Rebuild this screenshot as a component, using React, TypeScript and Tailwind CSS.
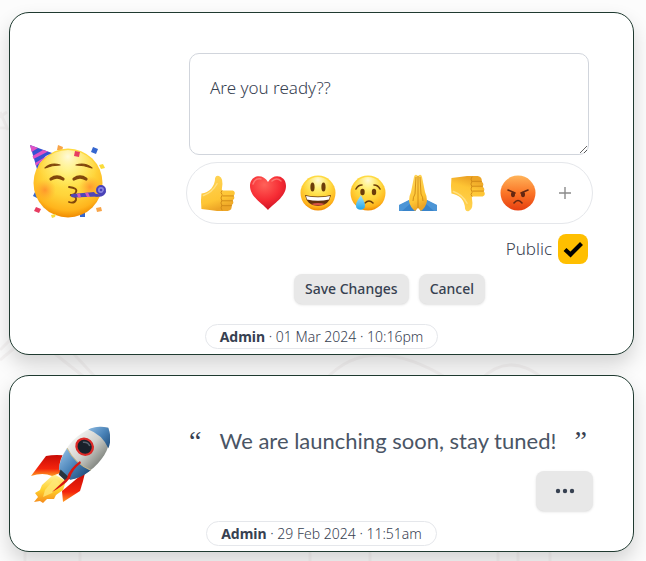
import React from "react";

function Gradients() {
  return (
    <svg className="absolute h-0 w-0" aria-hidden="true">
      <defs>
        <radialGradient id="face" cx="0.5" cy="0.3" r="0.7">
          <stop offset="0" stopColor="#fff05a" />
          <stop offset="0.55" stopColor="#ffd43a" />
          <stop offset="0.85" stopColor="#ffb41c" />
          <stop offset="1" stopColor="#f08a00" />
        </radialGradient>
        <radialGradient id="shine" cx="0.5" cy="0.1" r="0.5">
          <stop offset="0" stopColor="#fffbe0" stopOpacity="0.95" />
          <stop offset="1" stopColor="#fff27a" stopOpacity="0" />
        </radialGradient>
        <radialGradient id="blush">
          <stop offset="0" stopColor="#ff7a2a" stopOpacity="0.65" />
          <stop offset="1" stopColor="#ff9a2a" stopOpacity="0" />
        </radialGradient>
        <linearGradient id="angry" x1="0" y1="0" x2="0" y2="1">
          <stop offset="0" stopColor="#ffb45a" />
          <stop offset="0.5" stopColor="#fb7527" />
          <stop offset="1" stopColor="#e63f10" />
        </linearGradient>
        <linearGradient id="hand" x1="0" y1="0" x2="0.3" y2="1">
          <stop offset="0" stopColor="#ffd65a" />
          <stop offset="0.75" stopColor="#fec534" />
          <stop offset="1" stopColor="#eda526" />
        </linearGradient>
        <radialGradient id="heart" cx="0.4" cy="0.25" r="0.75">
          <stop offset="0" stopColor="#ff6259" />
          <stop offset="0.6" stopColor="#f62c34" />
          <stop offset="1" stopColor="#cf1426" />
        </radialGradient>
        <linearGradient id="tear" x1="0" y1="0" x2="0" y2="1">
          <stop offset="0" stopColor="#a5e6ff" />
          <stop offset="1" stopColor="#23a4e6" />
        </linearGradient>
        <linearGradient id="hull" x1="0" y1="0" x2="1" y2="0">
          <stop offset="0" stopColor="#f0f0ed" />
          <stop offset="0.5" stopColor="#cfd0cc" />
          <stop offset="1" stopColor="#858983" />
        </linearGradient>
        <linearGradient id="steel" x1="0" y1="0" x2="1" y2="0">
          <stop offset="0" stopColor="#86b5de" />
          <stop offset="0.5" stopColor="#4a83b8" />
          <stop offset="1" stopColor="#23507e" />
        </linearGradient>
        <linearGradient id="fin" x1="0" y1="0" x2="0" y2="1">
          <stop offset="0" stopColor="#c80c06" />
          <stop offset="0.65" stopColor="#f4240c" />
          <stop offset="1" stopColor="#ff9a20" />
        </linearGradient>
        <linearGradient id="flame" x1="0" y1="0" x2="0" y2="1">
          <stop offset="0" stopColor="#fff3a0" />
          <stop offset="0.55" stopColor="#ffd02c" />
          <stop offset="1" stopColor="#f5891a" />
        </linearGradient>
      </defs>
    </svg>
  );
}

function PartyFace() {
  return (
    <svg viewBox="0 -1 80 80" className="size-20 shrink-0" role="img" aria-label="Partying face">
      <path d="M28 5 l5 2 -1 4 -5 -1z M66 68 l5 -1 1 4 -5 1z" fill="#f8a549" />
      <path d="M50 73 h5 v4 h-5z M5 52 l4 2 -2 4 -4 -2z" fill="#3566cf" />
      <circle cx="38" cy="43" r="34.500" fill="url(#face)" />
      <circle cx="38" cy="43" r="33" fill="url(#shine)" />
      <circle cx="15" cy="50" r="11" fill="url(#blush)" />
      <circle cx="60" cy="47" r="11" fill="url(#blush)" />
      <path d="M0 5 L22 13 Q11 17 7 29 Z" fill="#3551d2" />
      <path d="M0 5 L8 8 L1.600 12 Z M13 10 L18 11.500 L3.500 19 L2.500 16 Z M22 13 L17 16 L6 26 L5 23 Z" fill="#e052c4" />
      <path d="M15 28 Q21 22 30 25 Q22 25 15 28 Z M46 25 Q55 22 62 28 Q54 25 46 25 Z" fill="#81470b" stroke="#81470b" strokeWidth="1.200" strokeLinejoin="round" />
      <path d="M21 39 Q27 35 33 39 M44 39 Q50 35 56 39" fill="none" stroke="#81470b" strokeWidth="3.200" strokeLinecap="round" />
      <path d="M39 47 Q48 48 46 52 Q45 55 40 55 Q47 56 46 60 Q44 64 39 62" fill="none" stroke="#81470b" strokeWidth="1.800" strokeLinecap="round" />
      <path d="M42 54 L64 52 L68 56.500 L43 57.500 Q39 56 42 54 Z" fill="#5147b6" />
      <path d="M47 54 L50 53.500 L51 57.500 L48 57.500 Z M55 53 L58 52.500 L60 57 L57 57 Z" fill="#d75ab8" />
      <circle cx="71" cy="50" r="4" fill="#8b86e0" stroke="#4a43b8" strokeWidth="2" />
      <circle cx="71" cy="50" r="1.300" fill="#4a43b8" />
      <path d="M65 55 Q73 57 75 51" fill="none" stroke="#4a43b8" strokeWidth="2.500" />
      <path d="M45 11 l5 1 -1 5 -5 -1z M6 67 l5 2 -2 4 -5 -2z" fill="#e73c61" />
      <path d="M63 7 l5 2 -2 5 -5 -2z" fill="#3566cf" />
      <path d="M69 25 l4 -1 2 4 -4 1z M21 75 l5 -1 -1 3 -3 1z" fill="#fadc3a" />
    </svg>
  );
}

function Rocket() {
  return (
    <svg viewBox="0 0 80 80" className="size-20 shrink-0" role="img" aria-label="Rocket">
      <path d="M24 48 L12 59 10 64 5 67 8 71 4 76 10 75 13 77 17 73 24 73 26 69 33 64 36 55 Z" fill="url(#flame)" />
      <path d="M25 52 L15 64 13 71 22 67 30 58 Z" fill="#ffe777" opacity="0.8" />
      <path d="M39 30 Q26 28 16 30 L1 50 Q13 46 22 50 L33 46 Z" fill="url(#fin)" />
      <path d="M50 50 Q38 60 32 65 L33 76 L50 65 Q53 56 55 47 Z" fill="url(#fin)" />
      <g transform="translate(51 31) rotate(43) scale(1.080 1)">
        <path d="M0 -40 C13 -33 18 -14 14.500 5 Q12 17 7 24 L-7 24 Q-13 17 -15 5 C-18 -14 -13 -33 0 -40Z" fill="url(#hull)" />
        <path d="M0 -40 C7 -36 11 -31 13 -25 Q0 -31 -12.500 -25 C-10 -32 -6 -36 0 -40Z" fill="url(#steel)" />
        <path d="M-15 3 Q0 9 15 3 Q13 17 7 24 L-7 24 Q-13 17 -15 3Z" fill="url(#steel)" />
        <path d="M-15 3 Q0 9 15 3" fill="none" stroke="#c8b98a" strokeWidth="1" />
        <circle cx="-4" cy="-10" r="9" fill="#dc2927" />
        <circle cx="-4" cy="-10" r="6.800" fill="#19202a" />
        <path d="M-8 -12 Q-5 -16 -1 -14" fill="none" stroke="#59636f" strokeWidth="1.500" />
        <path d="M-6 23 H6 L4 28 H-4 Z" fill="#29333d" />
      </g>
      <path d="M50 35 Q39 43 37 52 L22 66 Q35 59 40 52 Q42 44 51 37 Z" fill="#d71710" />
    </svg>
  );
}

const glyph = "size-9";

function Thumb({ down = false }: { down?: boolean }) {
  return (
    <svg viewBox="0 0 36 38" className={down ? "h-[37px] w-9 -scale-y-100" : "h-[37px] w-9"}>
      <path d="M1 19 Q7 18 11 14 Q15 9 15 3 Q16 0 19 1 Q24 3 22 14 L22 16 H33 Q36 17 35 20 L34 21 Q36 24 33 26 Q35 29 32 31 Q33 36 28 37 H17 Q10 36 1 35 Q0 26 1 19Z" fill="url(#hand)" />
      <path d="M22 16 Q20 18 22 20 M23 21.500 H34 M22 26.500 H33 M22 31.500 H32 M22 21 Q20 24 22 26 Q20 29 22 31 Q20 34 22 36" fill="none" stroke="#d18a18" strokeWidth="1" strokeLinecap="round" />
      <path d="M3 21 Q12 18 17 9" fill="none" stroke="#ffe083" strokeWidth="1.500" strokeLinecap="round" />
    </svg>
  );
}

function Heart() {
  return (
    <svg viewBox="0 0 36 36" className={glyph}>
      <path d="M18 35 C13 29 0 22 0 11 C0 0 13 -2 18 7 C23 -2 36 0 36 11 C36 22 23 29 18 35Z" fill="url(#heart)" />
      <path d="M3 9 Q5 3 11 4 M22 6 Q27 2 31 6" fill="none" stroke="#ff9b91" strokeWidth="1.500" strokeLinecap="round" opacity="0.6" />
    </svg>
  );
}

function Grin() {
  return (
    <svg viewBox="0 0 36 36" className={glyph}>
      <circle cx="18" cy="18" r="17.500" fill="url(#face)" />
      <circle cx="18" cy="18" r="16" fill="url(#shine)" />
      <ellipse cx="12.500" cy="12" rx="2.100" ry="4.500" fill="#6c3d0a" />
      <ellipse cx="23.500" cy="12" rx="2.100" ry="4.500" fill="#6c3d0a" />
      <path d="M5 20 Q18 23 31 20 Q29 31 18 31 Q7 31 5 20Z" fill="#63310c" />
      <path d="M6 21 Q18 23.500 30 21 L29 24.500 Q18 27 7 24.500Z" fill="#fff" />
      <path d="M11 29 Q18 27 25 29 Q18 32 11 29Z" fill="#d85346" />
    </svg>
  );
}

function Cry() {
  return (
    <svg viewBox="0 0 36 36" className={glyph}>
      <circle cx="18" cy="18" r="17.500" fill="url(#face)" />
      <circle cx="18" cy="18" r="16" fill="url(#shine)" />
      <ellipse cx="12.500" cy="17" rx="2.200" ry="3.200" fill="#6c3d0a" />
      <ellipse cx="24" cy="17" rx="2.200" ry="3.200" fill="#6c3d0a" />
      <path d="M6 14 Q8 10 12 10 M30 14 Q28 10 24 10 M15 28 Q19 24 23 28" fill="none" stroke="#6c3d0a" strokeWidth="1.600" strokeLinecap="round" />
      <path d="M11 20 C8 25 6 27 6 31 C6 36 15 36 15 31 C15 27 13 25 11 20Z" fill="url(#tear)" />
    </svg>
  );
}

function Pray() {
  return (
    <svg viewBox="0 0 38 38" className="size-[38px]">
      <path d="M0 31 L10 26 L17 37 H0Z M38 31 L28 26 L21 37 H38Z" fill="#3984ca" />
      <path d="M0 31 L10 26 L12 29 L3 37 H0Z M38 31 L28 26 L26 29 L35 37 H38Z" fill="#60a5e2" opacity="0.5" />
      <path d="M19 2 Q16 -1 15 3 L12 18 Q10 22 10 27 Q11 33 16 37 L19 34 L22 37 Q27 33 28 27 Q28 22 26 18 L23 3 Q22 -1 19 2Z" fill="url(#hand)" />
      <path d="M19 2 V34 M17 3 L16 20 Q14 23 14 27 M21 3 L22 20 Q24 23 24 27" fill="none" stroke="#c8820f" strokeWidth="0.800" />
    </svg>
  );
}

function Angry() {
  return (
    <svg viewBox="0 0 36 36" className={glyph}>
      <circle cx="18" cy="18" r="17.500" fill="url(#angry)" />
      <path d="M8 15 L15 18 M28 15 L21 18 M14 28 Q18 23 22 28" fill="none" stroke="#642711" strokeWidth="1.600" strokeLinecap="round" />
      <ellipse cx="13" cy="19.500" rx="2" ry="2.800" fill="#642711" />
      <ellipse cx="23" cy="19.500" rx="2" ry="2.800" fill="#642711" />
    </svg>
  );
}

const reactions = [
  { name: "Thumbs up", icon: <Thumb /> },
  { name: "Heart", icon: <Heart /> },
  { name: "Grinning", icon: <Grin /> },
  { name: "Crying", icon: <Cry /> },
  { name: "Folded hands", icon: <Pray /> },
  { name: "Thumbs down", icon: <Thumb down /> },
  { name: "Angry", icon: <Angry /> },
];

function Byline({ date }: { date: string }) {
  return (
    <p className="mx-auto w-fit rounded-full border border-gray-200 px-3.5 text-sm leading-[23px] font-light">
      <b className="font-bold">Admin</b> · {date}
    </p>
  );
}

const card =
  "rounded-[20px] border border-[#1f3a30] bg-white pb-[5px] shadow-[0_10px_20px_rgba(0,0,0,0.16)]";
const button = "rounded-lg bg-[#e8e8e8] font-medium shadow-sm";

export default function App() {
  return (
    <div className="relative min-h-screen bg-[#fcfcfc] pt-3 pr-3 pb-[9px] pl-[9px] font-['Noto_Sans',sans-serif] text-[#374151]">
      <Gradients />
      <svg className="absolute inset-0 h-full w-full" aria-hidden="true">
        <g fill="none" stroke="#c9b8b2" strokeOpacity="0.12" strokeWidth="3">
          <path d="M-5 120 l12 -8 M0 112 l8 18 M-4 128 h12" />
          <path d="M0 360 L30 335 M0 350 L20 330 M50 350 L88 380 M70 350 L98 380" />
          <path d="M325 380 Q370 330 450 380 M480 380 Q510 350 545 380" />
          <path d="M25 552 v9 M80 552 v9 M310 552 v9 M370 552 v9 M498 552 v9 M518 552 v9 M550 552 v9" />
        </g>
      </svg>
      <main className="relative flex flex-col gap-5">
        <article className={card}>
          <form className="flex items-center gap-19 pt-10 pr-10 pl-5" onSubmit={(e) => e.preventDefault()}>
            <PartyFace />
            <div className="min-w-0 flex-1">
              <textarea
                aria-label="Announcement"
                defaultValue="Are you ready??"
                className="mx-[3px] block h-[102px] w-[calc(100%-7px)] rounded-[10px] border border-gray-300 bg-white p-5 text-[17px] leading-7 font-light"
              />
              <div className="mt-[7px] flex h-[62px] items-center rounded-full border border-gray-200 pl-1.5">
                {reactions.map((r) => (
                  <button key={r.name} type="button" aria-label={r.name} className="flex w-[50px] justify-center">
                    {r.icon}
                  </button>
                ))}
                <button type="button" aria-label="More reactions" className="flex w-11 justify-center">
                  <svg viewBox="0 0 12 12" className="size-3">
                    <path d="M6 0V12M0 6H12" stroke="#8b8b8b" strokeWidth="1.400" />
                  </svg>
                </button>
              </div>
              <div className="mt-2.5 mr-[5px] flex items-center justify-end gap-1.5">
                <label htmlFor="public" className="text-[17px] leading-7 font-light">Public</label>
                <span className="grid">
                  <input
                    id="public"
                    type="checkbox"
                    defaultChecked
                    className="peer col-start-1 row-start-1 size-[30px] appearance-none rounded-lg bg-[#ffbf00]"
                  />
                  <svg viewBox="0 0 30 30" className="pointer-events-none col-start-1 row-start-1 hidden size-[30px] peer-checked:block">
                    <path d="M7 15.500 L12.500 20.500 L23.500 9.500" fill="none" stroke="#000" strokeWidth="4.200" />
                  </svg>
                </span>
              </div>
              <div className="mt-2.5 flex justify-center gap-2.5 text-sm">
                <button type="submit" className={`${button} h-[30px] px-[11px]`}>Save Changes</button>
                <button type="button" className={`${button} h-[30px] px-[11px]`}>Cancel</button>
              </div>
            </div>
          </form>
          <div className="mt-5">
            <Byline date="01 Mar 2024 · 10:16pm" />
          </div>
        </article>

        <article className={card}>
          <div className="flex items-center gap-19 pt-11 pr-10 pl-5">
            <Rocket />
            <div className="min-w-0 flex-1">
              <blockquote className="flex h-[41px] items-center justify-between pr-1.5 pl-[3px] whitespace-nowrap">
                <span className="font-['Liberation_Serif',serif] text-[28px] leading-8">“</span>
                <p className="font-['Lato',sans-serif] text-[22px] leading-8 text-gray-600">We are launching soon, stay tuned!</p>
                <span className="font-['Liberation_Serif',serif] text-[28px] leading-8">”</span>
              </blockquote>
              <div className="mt-2.5 flex justify-end">
                <button type="button" aria-label="More options" className={`${button} flex h-10 w-[57px] items-center justify-center`}>
                  <svg viewBox="0 0 20 6" className="h-1.5 w-5" fill="#374151">
                    <circle cx="3" cy="3" r="2.200" />
                    <circle cx="10" cy="3" r="2.200" />
                    <circle cx="17" cy="3" r="2.200" />
                  </svg>
                </button>
              </div>
            </div>
          </div>
          <div className="mt-2.5">
            <Byline date="29 Feb 2024 · 11:51am" />
          </div>
        </article>
      </main>
    </div>
  );
}
